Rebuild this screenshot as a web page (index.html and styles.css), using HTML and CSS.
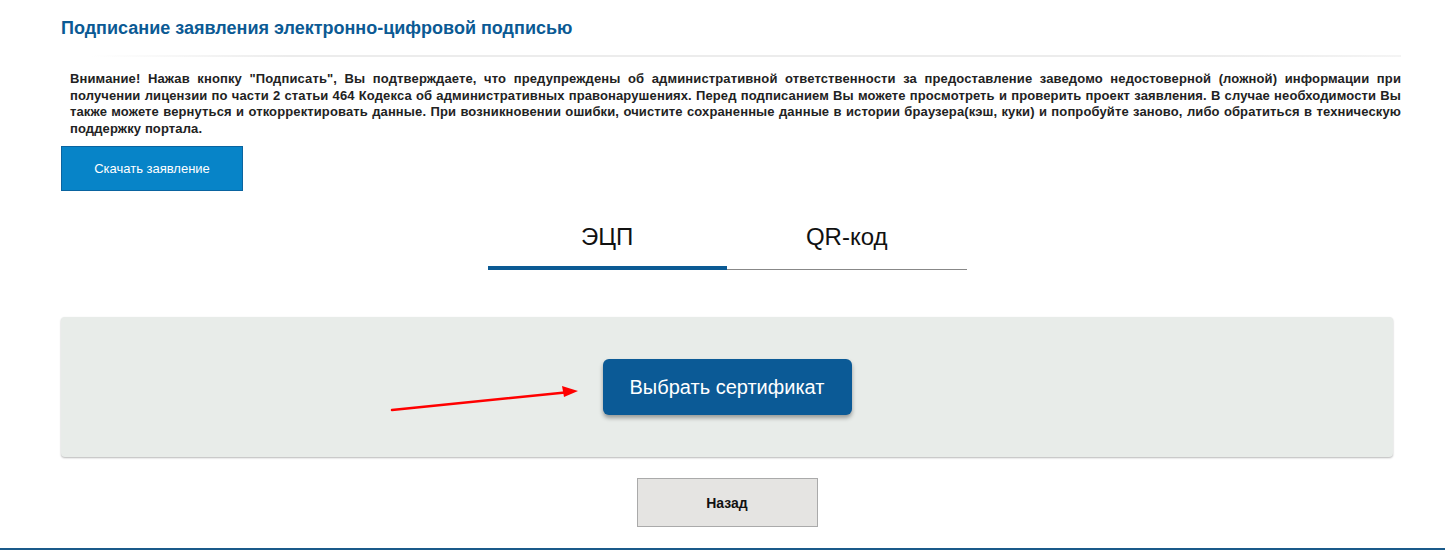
FILE: index.html
```html
<!DOCTYPE html>
<html lang="ru">
<head>
<meta charset="utf-8">
<title>Подписание заявления</title>
<link rel="stylesheet" href="styles.css">
</head>
<body>
<div class="page">
  <h1 class="title">Подписание заявления электронно-цифровой подписью</h1>
  <div class="sep"></div>
  <p class="notice">Внимание! Нажав кнопку "Подписать", Вы подтверждаете, что предупреждены об административной ответственности за предоставление заведомо недостоверной (ложной) информации при получении лицензии по части 2 статьи 464 Кодекса об административных правонарушениях. Перед подписанием Вы можете просмотреть и проверить проект заявления. В случае необходимости Вы также можете вернуться и откорректировать данные. При возникновении ошибки, очистите сохраненные данные в истории браузера(кэш, куки) и попробуйте заново, либо обратиться в техническую поддержку портала.</p>
  <button class="btn-download">Скачать заявление</button>
  <div class="tabs">
    <div class="tab active">ЭЦП</div>
    <div class="tab">QR-код</div>
  </div>
  <div class="panel">
    <svg class="arrow" width="200" height="30" viewBox="0 0 200 30">
      <line x1="2" y1="26" x2="180" y2="8" stroke="#f00" stroke-width="2.5" stroke-linecap="round"/>
      <polygon points="188,7 172,2 174,13" fill="#f00"/>
    </svg>
    <button class="btn-cert">Выбрать сертификат</button>
  </div>
  <div class="back-row">
    <button class="btn-back">Назад</button>
  </div>
</div>
<div class="footer-line"></div>
</body>
</html>
```
FILE: styles.css
```css
html, body {
  margin: 0;
  padding: 0;
  background: #fff;
  font-family: "Liberation Sans", Arial, sans-serif;
}
.page {
  padding: 0 52px 0 61px;
  height: 548px;
  box-sizing: border-box;
  overflow: hidden;
}
.title {
  margin: 0;
  padding-top: 17px;
  font-size: 18px;
  line-height: 22px;
  font-weight: bold;
  color: #0b5a94;
}
.sep {
  height: 2px;
  margin: 16px -8px 0 30px;
  background: linear-gradient(to right, #fff, #ececec 15%, #ececec 85%, #f4f4f4);
}
.notice {
  margin: 14px -8px 0 9px;
  font-size: 13px;
  line-height: 16.5px;
  font-weight: bold;
  color: #222;
  text-align: justify;
  letter-spacing: 0.12px;
}
.btn-download {
  display: block;
  margin-top: 9px;
  width: 182px;
  height: 45px;
  background: #0784c8;
  border: 1px solid #0a64a0;
  color: #fff;
  font-family: "Liberation Sans", Arial, sans-serif;
  font-size: 13px;
  padding: 0;
}
.tabs {
  display: flex;
  width: 479px;
  height: 54px;
  box-sizing: border-box;
  margin: 25px auto 0;
  border-bottom: 1px solid #888;
}
.tab {
  flex: 1;
  text-align: center;
  font-size: 24px;
  color: #111;
  height: 54px;
  line-height: 36px;
  padding-top: 3px;
  box-sizing: border-box;
}
.tab.active {
  border-bottom: 4px solid #0b5a94;
}
.panel {
  margin-top: 47px;
  width: 1332px;
  height: 140px;
  background: #e8ece9;
  border-radius: 4px;
  box-shadow: 0 1px 2px #b8b8b8;
  display: flex;
  align-items: center;
  justify-content: center;
  position: relative;
}
.arrow {
  position: absolute;
  left: 329px;
  top: 67px;
}
.btn-cert {
  width: 249px;
  height: 56px;
  background: #0b5a96;
  border: none;
  border-radius: 6px;
  color: #fff;
  font-family: "Liberation Sans", Arial, sans-serif;
  font-size: 20px;
  box-shadow: 0 3px 4px rgba(0,0,0,0.35);
}
.back-row {
  display: flex;
  justify-content: center;
  margin-top: 21px;
}
.btn-back {
  width: 181px;
  height: 49px;
  background: #e5e4e2;
  border: 1px solid #aaa;
  font-family: "Liberation Sans", Arial, sans-serif;
  font-size: 14px;
  font-weight: bold;
  color: #111;
}
.footer-line {
  height: 2px;
  background: #1a5a8a;
}
```
